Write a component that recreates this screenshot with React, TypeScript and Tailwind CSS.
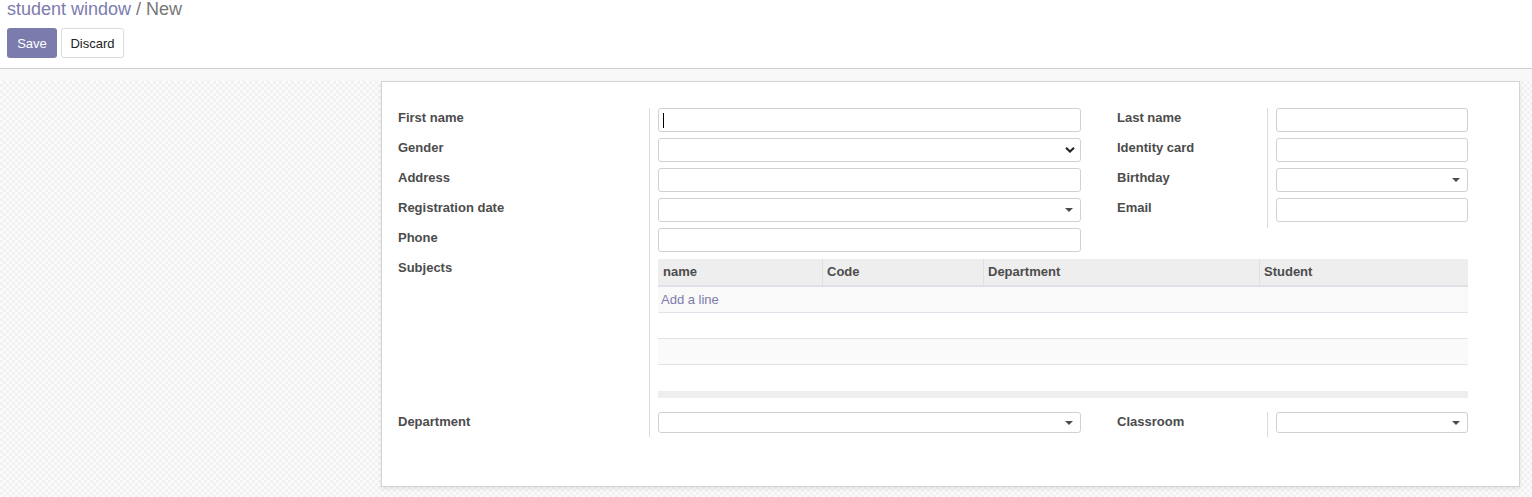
import type { ReactNode } from 'react'

const font = { fontFamily: '"Liberation Sans", Arial, sans-serif' }

function Caret() {
  return (
    <svg width="8" height="4" viewBox="0 0 8 4" className="absolute right-[7px] top-1/2 -translate-y-1/2">
      <path d="M0 0h8L4 4z" fill="#4c4c4c" />
    </svg>
  )
}

function Chevron() {
  return (
    <svg width="10" height="7" viewBox="0 0 10 7" className="absolute right-[5px] top-1/2 -translate-y-1/2">
      <path d="M1 1.2l4 3.8 4-3.8" fill="none" stroke="#222" strokeWidth="2" />
    </svg>
  )
}

function Field({ width, kind, cursor, small }: { width: string; kind?: 'caret' | 'chevron'; cursor?: boolean; small?: boolean }) {
  return (
    <div
      className={`relative ${width} ${small ? 'h-[21px]' : 'h-[24px]'} border border-[#d1d1d1] rounded-[3px] bg-white`}
    >
      {cursor && <div className="absolute left-[4px] top-[4px] h-[15px] w-px bg-black" />}
      {kind === 'caret' && <Caret />}
      {kind === 'chevron' && <Chevron />}
    </div>
  )
}

function Label({ children }: { children: ReactNode }) {
  return <div className="pt-[1px] text-[13px] leading-[18px] font-bold text-[#4c4c4c]">{children}</div>
}

const columns = [
  { name: 'name', w: 'w-[164px]' },
  { name: 'Code', w: 'w-[161px]' },
  { name: 'Department', w: 'w-[276px]' },
  { name: 'Student', w: 'flex-1' },
]

export default function App() {
  return (
    <div className="h-[497px] overflow-hidden flex flex-col bg-white" style={font}>
      {/* control panel */}
      <div className="h-[69px] border-b border-[#cfcfcf] px-[7px] shrink-0">
        <div className="text-[18px] leading-[19px]">
          <span className="text-[#7c7bad]">student window</span>
          <span className="text-[#777]"> / New</span>
        </div>
        <div className="flex gap-[4px] mt-[9px]">
          <button className="h-[30px] w-[50px] rounded-[3px] bg-[#7c7bad] text-white text-[13px] pt-[1px]">Save</button>
          <button className="h-[30px] w-[63px] rounded-[3px] bg-white border border-[#dcdcdc] text-[#222] text-[13px] pt-[1px]">
            Discard
          </button>
        </div>
      </div>

      <div className="h-[12px] bg-[#f8f8f8] shrink-0" />

      <div className="flex-1 bg-[repeating-conic-gradient(#f1f1f1_0%_25%,#fbfbfb_0%_50%)] bg-size-[6px_6px]">
        <div className="ml-[381px] w-[1139px] h-[406px] border border-[#d4d4d4] bg-white shadow-[0_2px_4px_rgba(0,0,0,0.08)] pl-[16px] pt-[26px]">
          <div className="grid grid-cols-[252px_467px_150px_201px]">
            {/* row 1 */}
            <div className="h-[30px] border-r border-[#dcdcdc]"><Label>First name</Label></div>
            <div className="pl-[8px]"><Field width="w-[423px]" cursor /></div>
            <div><Label>Last name</Label></div>
            <div className="border-l border-[#dcdcdc] pl-[8px]"><Field width="w-[192px]" /></div>
            {/* row 2 */}
            <div className="h-[30px] border-r border-[#dcdcdc]"><Label>Gender</Label></div>
            <div className="pl-[8px]"><Field width="w-[423px]" kind="chevron" /></div>
            <div><Label>Identity card</Label></div>
            <div className="border-l border-[#dcdcdc] pl-[8px]"><Field width="w-[192px]" /></div>
            {/* row 3 */}
            <div className="h-[30px] border-r border-[#dcdcdc]"><Label>Address</Label></div>
            <div className="pl-[8px]"><Field width="w-[423px]" /></div>
            <div><Label>Birthday</Label></div>
            <div className="border-l border-[#dcdcdc] pl-[8px]"><Field width="w-[192px]" kind="caret" /></div>
            {/* row 4 */}
            <div className="h-[30px] border-r border-[#dcdcdc]"><Label>Registration date</Label></div>
            <div className="pl-[8px]"><Field width="w-[423px]" kind="caret" /></div>
            <div><Label>Email</Label></div>
            <div className="border-l border-[#dcdcdc] pl-[8px]"><Field width="w-[192px]" /></div>
            {/* row 5 */}
            <div className="h-[30px] border-r border-[#dcdcdc]"><Label>Phone</Label></div>
            <div className="pl-[8px]"><Field width="w-[423px]" /></div>
            <div />
            <div />
            {/* subjects */}
            <div className="border-r border-[#dcdcdc]"><Label>Subjects</Label></div>
            <div className="col-span-3 pl-[8px] pt-[1px] pb-[14px]">
              <div className="w-[810px] text-[13px]">
                <div className="flex h-[28px] bg-[#eeeeee] border-b-2 border-[#dee2e6] font-bold text-[#4c4c4c]">
                  {columns.map((c, i) => (
                    <div
                      key={c.name}
                      className={`${c.w} leading-[25px] ${i === 0 ? 'pl-[5px]' : 'pl-[4px] border-l border-[#e0e0e0]'}`}
                    >
                      {c.name}
                    </div>
                  ))}
                </div>
                <div className="h-[26px] bg-[#f9f9f9] border-b border-[#e2e2ea] pl-[3px] leading-[25px] text-[#7c7bad]">
                  Add a line
                </div>
                <div className="h-[26px] bg-white border-b border-[#e2e2ea]" />
                <div className="h-[26px] bg-[#fafafa] border-b border-[#e2e2ea]" />
                <div className="h-[26px] bg-white" />
                <div className="h-[7px] bg-[#eeeeee]" />
              </div>
            </div>
            {/* department row */}
            <div className="h-[25px] border-r border-[#dcdcdc]"><Label>Department</Label></div>
            <div className="pl-[8px]"><Field width="w-[423px]" kind="caret" small /></div>
            <div><Label>Classroom</Label></div>
            <div className="border-l border-[#dcdcdc] pl-[8px]"><Field width="w-[192px]" kind="caret" small /></div>
          </div>
        </div>
      </div>
    </div>
  )
}
